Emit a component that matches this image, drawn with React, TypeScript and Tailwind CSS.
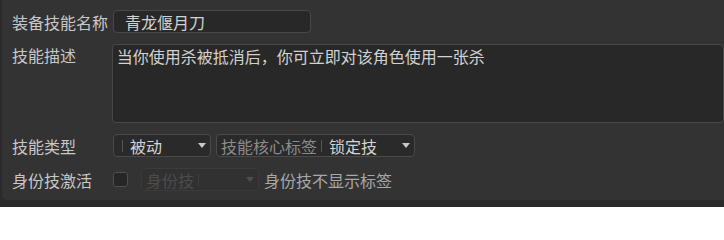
import React from 'react';

const font = { fontFamily: '"Noto Sans CJK SC", "Noto Sans", sans-serif' };

function Arrow({ dim }: { dim?: boolean }) {
  return (
    <svg width="8" height="5" viewBox="0 0 8 5" className="shrink-0">
      <path d="M0 0 L8 0 L4 5 Z" fill={dim ? '#4e4e4e' : '#c8c8c8'} />
    </svg>
  );
}

function Select({
  width,
  placeholder,
  value,
  disabled,
}: {
  width: string;
  placeholder?: string;
  value?: string;
  disabled?: boolean;
}) {
  return (
    <div
      className={`${width} h-[23px] flex items-center rounded-[4px] border pl-[4px] pr-[4px] ${
        disabled ? 'border-[#3a3a3a] bg-[#313131]' : 'border-[#4a4a4a] bg-[#2a2a2a]'
      }`}
    >
      <span className={`text-[16px] leading-none ${disabled ? 'text-[#4c4c4c]' : 'text-[#8c8c8c]'}`}>
        {placeholder}
      </span>
      <span className={`ml-[4px] mr-[7px] w-px h-[12px] ${disabled ? 'bg-[#3e3e3e]' : 'bg-[#555]'}`} />
      <span className="flex-1 text-[16px] leading-none text-[#d4d4d4]">{value}</span>
      <Arrow dim={disabled} />
    </div>
  );
}

export default function App() {
  return (
    <div className="w-[724px] h-[207px] bg-[#2a2a2a] overflow-hidden" style={font}>
      <div className="ml-[2px] h-[200px] bg-[#333333] rounded-bl-[5px] pl-[10px] pt-[10px] flex flex-col gap-[11px]">
        {/* 名称 */}
        <div className="flex items-center">
          <div className="w-[101px] text-[16px] text-[#c8c8c8] leading-none">装备技能名称</div>
          <div className="w-[198px] h-[23px] rounded-[4px] border border-[#484848] bg-[#282828] flex items-center pl-[11px] text-[16px] text-[#d2d2d2] leading-none">
            青龙偃月刀
          </div>
        </div>

        {/* 描述 */}
        <div className="flex items-start">
          <div className="w-[101px] pt-[3px] text-[16px] text-[#c8c8c8] leading-none">技能描述</div>
          <div className="w-[620px] h-[79px] rounded-[4px] border border-[#484848] bg-[#282828] pl-[4px] pt-[3px] text-[16px] text-[#d2d2d2] leading-none">
            当你使用杀被抵消后，你可立即对该角色使用一张杀
          </div>
        </div>

        {/* 类型 */}
        <div className="flex items-center">
          <div className="w-[101px] text-[16px] text-[#c8c8c8] leading-none">技能类型</div>
          <Select width="w-[98px]" value="被动" />
          <div className="w-[5px]" />
          <Select width="w-[199px]" placeholder="技能核心标签" value="锁定技" />
        </div>

        {/* 身份技 */}
        <div className="flex items-center">
          <div className="w-[101px] text-[16px] text-[#c8c8c8] leading-none">身份技激活</div>
          <div className="w-[15px] h-[15px] rounded-[3px] border border-[#4e4e4e] bg-[#262626]" />
          <div className="w-[13px]" />
          <Select width="w-[118px]" placeholder="身份技" disabled />
          <span className="ml-[5px] text-[16px] text-[#a8a8a8] leading-none">身份技不显示标签</span>
        </div>
      </div>
    </div>
  );
}
